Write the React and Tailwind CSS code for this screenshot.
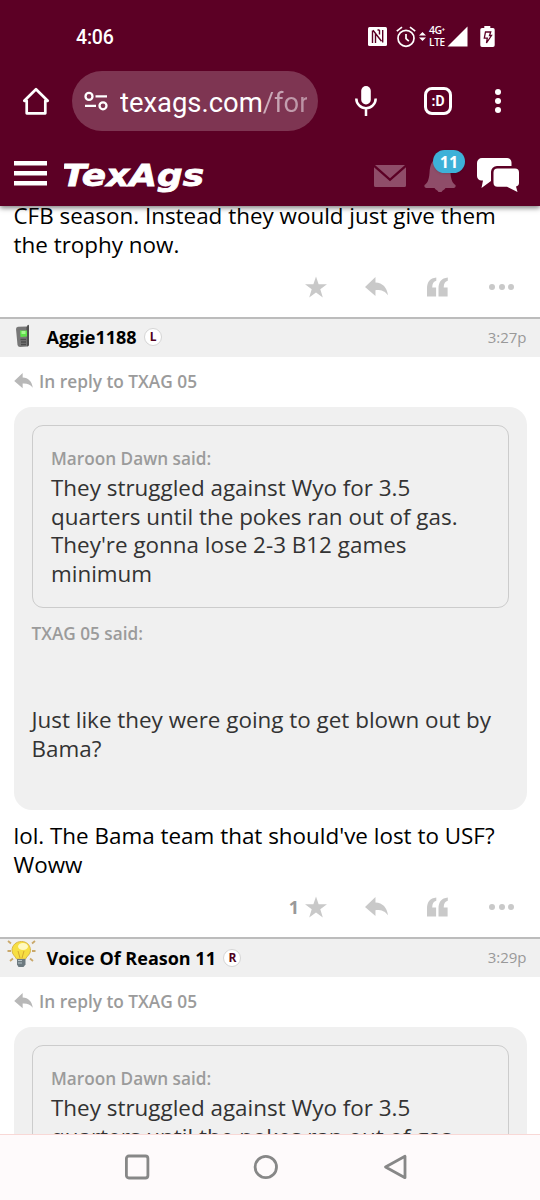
import React from "react";

const posts = [
  {
    id: 1,
    user: "Aggie1188",
    rank: "L",
    time: "3:27p",
    avatar: "phone",
    replyTo: "TXAG 05",
    stars: 1,
    body: "lol. The Bama team that should've lost to USF? Woww",
  },
  {
    id: 2,
    user: "Voice Of Reason 11",
    rank: "R",
    time: "3:29p",
    avatar: "bulb",
    replyTo: "TXAG 05",
    stars: 0,
    body: "",
  },
];

const StatusBar = () => (
  <div className="flex h-[71px] items-start pl-[76px] pr-[45px] font-['Roboto',sans-serif] text-white">
    <span className="mt-[25px] text-[19.5px] leading-[26px] font-medium tracking-[-0.2px]">
      4:06
    </span>
    <div className="mt-[25px] ml-auto flex items-center">
      {/* NFC */}
      <svg className="h-[19px] w-[19px]" viewBox="0 0 19 19">
        <rect width="19" height="19" rx="1.5" fill="#fff" />
        <path d="M4.5 16V3.500M7.500 16V6.500M5 3.300l8.500 11M9.500 3h2M11.500 3v4.500M14.700 3v12.500" fill="none" stroke="#5c0025" strokeWidth="1.400" />
      </svg>
      {/* alarm */}
      <svg className="ml-[9px] h-[22px] w-5" viewBox="0 0 20 22" fill="none" stroke="#fff" strokeWidth="1.7">
        <circle cx="10" cy="12.3" r="8" />
        <path d="M.8 5.2 6 1.2M19.2 5.2 14 1.2M10 8v4.6l2.8 2.6" />
      </svg>
      <svg className="ml-[3px] h-[11px] w-[7px]" viewBox="0 0 7 11" fill="#fff">
        <path d="M0 4.5 3.5 1 7 4.5zM0 6.5 3.500 10 7 6.500z" />
      </svg>
      <div className="ml-[3px] flex w-[16px] flex-col font-['Open_Sans',sans-serif] text-[10.500px] leading-[11.500px] font-semibold">
        <span className="whitespace-nowrap tracking-[-0.6px]">4G⁺</span>
        <span className="text-[10px] tracking-[-0.3px]">LTE</span>
      </div>
      <svg className="ml-[2px] h-[21px] w-[21px]" viewBox="0 0 21 21">
        <path d="M20.500.5V20.500H.5z" fill="#fff" />
      </svg>
      {/* charging battery */}
      <svg className="ml-[12px] h-[21px] w-[15px]" viewBox="0 0 15 21">
        <path d="M4.300 0h6v2H13a1.700 1.700 0 0 1 1.700 1.700v15.500a1.700 1.700 0 0 1-1.700 1.700H2A1.700 1.700 0 0 1 .3 19.200V3.700A1.700 1.700 0 0 1 2 2h2.300z" fill="#fff" />
        <path d="M5.500 6h5.200L9.500 9.500h2L6.500 17l.8-4.800H4.300z" fill="none" stroke="#5c0025" strokeWidth="1.300" />
      </svg>
    </div>
  </div>
);

const BrowserBar = () => (
  <div className="flex h-[60px] items-center pl-[22px] font-['Roboto',sans-serif]">
    <svg className="h-[28px] w-[28px]" viewBox="0 0 28 28" fill="none" stroke="#fff" strokeWidth="2.700" strokeLinejoin="round" strokeLinecap="round">
      <path d="M2.300 13.800 14 2.300l11.700 11.500H23.300V26.300H4.700V13.800z" />
    </svg>
    <div className="ml-[22px] flex h-[60px] w-[246px] items-center rounded-full bg-[#7e3552] pl-[12px]">
      <svg className="h-[20px] w-6 shrink-0" viewBox="0 0 24 20" fill="none" stroke="#fff" strokeWidth="2.300">
        <circle cx="5" cy="5.400" r="3.500" />
        <circle cx="19" cy="14.800" r="3.500" />
        <path d="M11.500 5.400H23M1 14.800h11" />
      </svg>
      <div className="mt-[3px] ml-[12px] w-[187px] overflow-hidden text-[27.400px] leading-[36px] whitespace-nowrap text-white">
        texags.com<span className="bg-linear-to-r from-[#cdb0bd] to-[#b98fa1] bg-clip-text text-transparent">/for</span>
      </div>
    </div>
    <svg className="ml-[37px] h-[30px] w-[22px]" viewBox="0 0 22 30">
      <rect x="6.200" y="0" width="9.600" height="18.500" rx="4.800" fill="#fff" />
      <path d="M1.300 12.500a9.700 9.700 0 0 0 19.400 0M11 22.500V30" fill="none" stroke="#fff" strokeWidth="2.500" />
    </svg>
    <div className="ml-[47px] flex h-7 w-7 items-center justify-center rounded-[8px] border-[3px] border-white text-[14px] leading-none font-bold text-white">
      :D
    </div>
    <div className="ml-[43px] flex flex-col gap-[3px]">
      <span className="h-[6px] w-[6px] rounded-full bg-white" />
      <span className="h-[6px] w-[6px] rounded-full bg-white" />
      <span className="h-[6px] w-[6px] rounded-full bg-white" />
    </div>
  </div>
);

const SiteHeader = () => (
  <div className="flex h-[75px] items-start pt-[19px] pl-[14px]">
    <svg className="mt-[11px] h-[25px] w-[33px]" viewBox="0 0 33 25" fill="#fff">
      <path d="M0 0h33v4.500H0zM0 10h33v4.500H0zM0 20h33v4.500H0z" />
    </svg>
    <svg className="mt-[6px] ml-[17px] h-10 w-[145px]" viewBox="0 0 145 40">
      <text
        x="-2"
        y="29.500"
        textLength="142"
        lengthAdjust="spacingAndGlyphs"
        fill="#fff"
        stroke="#fff"
        strokeWidth="0.8"
        fontSize="31"
        fontWeight="700"
        fontStyle="italic"
        fontFamily="'DejaVu Sans', sans-serif"
      >
        TexAgs
      </text>
    </svg>
    <svg className="mt-[15px] ml-[165px] h-[22px] w-8" viewBox="0 0 32 22" fill="#8f4d69">
      <path d="M1 0h30L16 13.200z" />
      <path d="M0 2.300 16 16.300 32 2.300V20.500a1.500 1.500 0 0 1-1.500 1.500h-29A1.500 1.500 0 0 1 0 20.500z" />
    </svg>
    <div className="relative mt-[6px] ml-[18px] h-9 w-8">
      <svg className="h-9 w-8" viewBox="0 0 32 36" fill="#8f4d69">
        <path d="M16 1C8 2 6 9 5.500 17 5 24 3.500 27 .5 29c-.5 2 .5 3 2 3h8c1 2 3 2 4 4h3c1-2 3-2 4-4h8c1.500 0 2.500-1 2-3-3-2-4.500-5-5-12C26 9 24 2 16 1z" />
      </svg>
      <span className="absolute -top-[6px] left-[9px] flex h-[23px] w-[32px] items-center justify-center rounded-full bg-[#3eb1d8] font-['Open_Sans',sans-serif] text-[16px] leading-none font-bold text-white shadow">
        11
      </span>
    </div>
    <svg className="mt-[8px] ml-[21px] h-[34px] w-[42px]" viewBox="0 0 42 34" fill="#fff">
      <path d="M5 0h25a4.500 4.500 0 0 1 4.500 4.500V8H20a6 6 0 0 0-6 6v9L4.500 30 6 22.500H4.500A4.500 4.500 0 0 1 0 18V5a5 5 0 0 1 5-5z" />
      <path d="M20.500 10.500H38a4 4 0 0 1 4 4V25a3.500 3.500 0 0 1-3 3.500L40.500 34 30 28.800h-9.500a4 4 0 0 1-4-4V14.500a4 4 0 0 1 4-4z" />
    </svg>
  </div>
);

const ReplyIcon = ({ className }) => (
  <svg className={className} viewBox="0 0 22 19" fill="currentColor">
    <path d="M0 9.500 10 0v5.200c7 .3 11 4.800 12 12.300-3-4.300-7-5.300-12-5V18z" />
  </svg>
);

const Actions = ({ stars }) => (
  <div className="flex h-[57.400px] items-center justify-end pr-[26px] pb-[2px] text-[#c9c9c9]">
    {stars > 0 && (
      <span className="mr-[6px] text-[18px] leading-none font-bold text-[#999]">{stars}</span>
    )}
    <svg className="h-[22px] w-[22px]" viewBox="0 0 21 20" fill="currentColor">
      <path d="M10.500 0 13 7.300l8 .1-6.400 4.700L17 20l-6.500-4.700L4 20l2.400-7.900L0 7.400l8-.1z" />
    </svg>
    <ReplyIcon className="ml-[38px] h-[20px] w-[23px]" />
    <svg className="ml-[39px] h-[20px] w-[21px]" viewBox="0 0 21 19" fill="currentColor">
      <path d="M9.300 0v3.300C6.700 4 5.300 6 5.200 10h3.900v9H0v-8C0 4.500 3 .7 9.300 0zM20.800 0v3.300c-2.600.7-4 2.700-4.100 6.700h3.900v9h-9.100v-8c0-6.500 3-10.300 9.300-11z" />
    </svg>
    <div className="ml-[41px] flex gap-[3.500px]">
      <span className="h-[6px] w-[6px] rounded-full bg-[#c9c9c9]" />
      <span className="h-[6px] w-[6px] rounded-full bg-[#c9c9c9]" />
      <span className="h-[6px] w-[6px] rounded-full bg-[#c9c9c9]" />
    </div>
  </div>
);

const Avatar = ({ type }) => {
  if (type === "phone") {
    return (
      <svg className="mb-[2px] ml-[10px] h-[24px] w-[26px]" viewBox="0 0 26 24">
        <path d="M17 1.500q2-1.500 2 0V21q0 1-1.500 1.500L10 23q-2 0-2.500-2L6 5q0-2 2-2.200l9-.3z" fill="#777" />
        <path d="M16.500 3 19 1v20l-2 1.500z" fill="#505050" />
        <path d="M10 6.500h7v6l-6.500.5z" fill="#5ee04a" />
        <path d="M11.500 7h4v3h-4z" fill="#a5f58f" />
        <path d="M10.500 15.500H16M11 18h5M11 20.500h5" stroke="#4b4b4b" strokeWidth="1.300" />
      </svg>
    );
  }
  return (
    <svg className="mb-[7px] ml-[7px] h-[28px] w-[29px]" viewBox="0 0 29 28">
      <path d="m1 1 3 2.500M28 1l-3 2.500M.5 11h3.500M25 11h3.500M3 21l3-2.500M26 21l-3-2.500" stroke="#c9a86b" strokeWidth="1.800" />
      <path d="M14.500 1.500C9 1.500 5 5.300 5 10.500c0 4 3.300 5.500 4.500 8.500h9c1.200-3 5-4.500 5-8.500 0-5.200-3.800-9-9-9z" fill="#f7df42" stroke="#d9b64a" strokeWidth="1" />
      <ellipse cx="16" cy="6.500" rx="5" ry="3.500" fill="#fff9c0" />
      <path d="m11 11 2 7M17 11l-2 7" stroke="#d6a92f" strokeWidth="1" />
      <path d="M10 19h8.500v5.500L16.500 27h-5L10 24.500z" fill="#6d7a80" />
      <path d="M11 20.500h4M11 23h4" stroke="#b8c4c8" strokeWidth="1.200" />
    </svg>
  );
};

const Said = ({ name }) => (
  <p className="text-[17.200px] leading-[28.800px] font-semibold text-[#9b9b9b]">{name} said:</p>
);

const Post = ({ post }) => (
  <article>
    <div className="flex h-[40px] items-center border-t-2 border-[#bcbcbc] bg-[#f0f0f0] pr-[13.500px] pb-[1px]">
      <div className="flex w-[46.500px] shrink-0">
        <Avatar type={post.avatar} />
      </div>
      <span className="text-[18px] leading-6 font-bold text-black">{post.user}</span>
      <span className="ml-[7.500px] flex h-[18px] w-[18px] items-center justify-center rounded-full border border-[#d5d5d5] bg-white text-[12px] leading-none font-bold text-[#500020]">
        {post.rank}
      </span>
      <span className="ml-auto text-[15px] text-[#999]">{post.time}</span>
    </div>
    <div className="flex h-[50px] items-center pl-[14px] text-[#b8b8b8]">
      <ReplyIcon className="mb-[2px] h-[16px] w-[19px]" />
      <span className="ml-[6px] text-[17.300px] font-semibold text-[#9b9b9b]">In reply to {post.replyTo}</span>
    </div>
    <div className="mx-[13.500px] rounded-[18px] bg-[#f0f0f0] p-[18px] text-[#333]">
      <div className="mb-[12.300px] rounded-[11px] border-[1.500px] border-[#ccc] px-[18.500px] pt-[19px] pb-[18px]">
        <Said name="Maroon Dawn" />
        <p>
          They struggled against Wyo for 3.5 quarters until the pokes ran out of gas. They're gonna
          lose 2-3 B12 games minimum
        </p>
      </div>
      <Said name={post.replyTo} />
      <p className="pt-[57.400px] pb-[28px]">
        Just like they were going to get blown out by Bama?
      </p>
    </div>
    <p className="mx-[13.500px] mt-[12px]">{post.body}</p>
    <Actions stars={post.stars} />
  </article>
);

const NavBar = () => (
  <div className="flex h-[66px] shrink-0 items-center border-t border-[#f8d8d6] bg-[#fefafb] pb-[2px] pl-[124px]">
    <svg className="h-[26px] w-[283px]" viewBox="0 0 283 26" fill="none" stroke="#878787" strokeWidth="2.800" strokeLinejoin="round">
      <rect x="2.400" y="2" width="21.500" height="22" rx="2.500" />
      <circle cx="141.800" cy="13" r="10.700" />
      <path d="M281 2.300v21.400L261.500 13z" />
    </svg>
  </div>
);

const App = () => {
  return (
    <div className="flex h-[1200px] w-[540px] flex-col overflow-hidden bg-white font-['Open_Sans',sans-serif]">
      <header className="relative z-10 h-[206px] shrink-0 bg-[#5c0025] shadow-[0_2px_5px_rgba(0,0,0,0.5)]">
        <StatusBar />
        <BrowserBar />
        <SiteHeader />
      </header>

      <main className="min-h-0 flex-1 overflow-hidden text-[22.430px] leading-[28.800px] text-black">
        {/* tail of the post scrolled under the header */}
        <p className="-mt-[4px] px-[13.500px]">
          CFB season. Instead they would just give them the trophy now.
        </p>
        <Actions stars={0} />
        {posts.map((post) => (
          <Post key={post.id} post={post} />
        ))}
      </main>

      <NavBar />
    </div>
  );
};

export default App;
